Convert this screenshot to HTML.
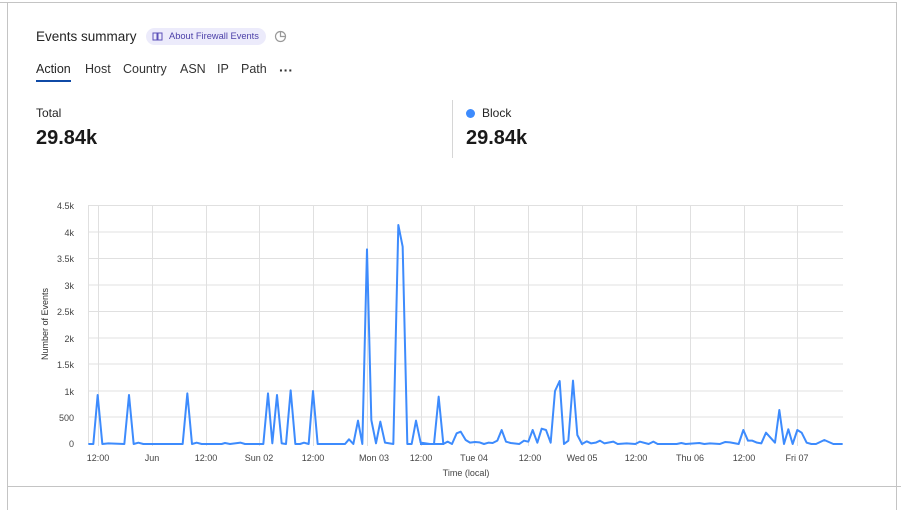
<!DOCTYPE html>
<html><head><style>
body{margin:0;width:901px;height:510px;background:#fff;font-family:"Liberation Sans",sans-serif;color:#1f1f1f;position:relative;overflow:hidden}
.a{position:absolute;white-space:nowrap}
</style></head><body>
<div class="a" style="left:0;top:2px;width:897px;height:1px;background:#c4c4c4"></div>
<div class="a" style="left:7px;top:486px;width:894px;height:1px;background:#c4c4c4"></div>
<div class="a" style="left:7px;top:2px;width:1px;height:508px;background:#c4c4c4"></div>
<div class="a" style="left:896px;top:2px;width:1px;height:508px;background:#c4c4c4"></div>
<div class="a" style="left:36px;top:29px;font-size:13.5px;color:#242424">Events summary</div>
<div class="a" style="left:146px;top:28px;width:120px;height:17px;border-radius:9px;background:#ecebfb"></div>
<svg class="a" style="left:152px;top:31px" width="12" height="11" viewBox="0 0 12 11"><path d="M1 2h4v7H1zM6 2h4v7H6z" fill="none" stroke="#5b50b8" stroke-width="1"/></svg>
<div class="a" style="left:169px;top:31px;font-size:9.3px;color:#4b3fa8">About Firewall Events</div>
<svg class="a" style="left:274px;top:30px" width="13" height="13" viewBox="0 0 13 13"><circle cx="6.5" cy="6.5" r="5" fill="none" stroke="#999" stroke-width="1.2"/><path d="M6.5 1.5v5h5" fill="none" stroke="#999" stroke-width="1.2"/></svg>
<div class="a" style="left:36px;top:62px;font-size:12.5px;color:#242424">Action</div>
<div class="a" style="left:36px;top:80px;width:35px;height:2px;background:#0f4aa6"></div>
<div class="a" style="left:85px;top:62px;font-size:12.5px;color:#333">Host</div>
<div class="a" style="left:123px;top:62px;font-size:12.5px;color:#333">Country</div>
<div class="a" style="left:180px;top:62px;font-size:12.5px;color:#333">ASN</div>
<div class="a" style="left:217px;top:62px;font-size:12.5px;color:#333">IP</div>
<div class="a" style="left:241px;top:62px;font-size:12.5px;color:#333">Path</div>
<div class="a" style="left:279px;top:62px;font-size:14px;font-weight:bold;color:#333">···</div>
<div class="a" style="left:36px;top:106px;font-size:12px;color:#242424">Total</div>
<div class="a" style="left:36px;top:127px;font-size:20px;font-weight:bold;color:#1a1a1a">29.84k</div>
<div class="a" style="left:452px;top:100px;width:1px;height:58px;background:#d6d6d6"></div>
<div class="a" style="left:466px;top:109px;width:9px;height:9px;border-radius:50%;background:#3d8bfd"></div>
<div class="a" style="left:482px;top:106px;font-size:12px;color:#242424">Block</div>
<div class="a" style="left:466px;top:127px;font-size:20px;font-weight:bold;color:#1a1a1a">29.84k</div>
<svg class="a" style="left:0;top:0" width="901" height="510">
<g stroke="#e0e0e0" stroke-width="1">
<line x1="88" y1="205.5" x2="843" y2="205.5"/><line x1="88" y1="232" x2="843" y2="232"/><line x1="88" y1="285" x2="843" y2="285"/><line x1="88" y1="338" x2="843" y2="338"/><line x1="88" y1="364" x2="843" y2="364"/><line x1="88" y1="391" x2="843" y2="391"/><line x1="88" y1="417" x2="843" y2="417"/><line x1="88" y1="258.5" x2="843" y2="258.5"/><line x1="88" y1="311.5" x2="843" y2="311.5"/>
<line x1="88.5" y1="205" x2="88.5" y2="444"/>
<line x1="98.5" y1="205" x2="98.5" y2="446"/><line x1="152.5" y1="205" x2="152.5" y2="446"/><line x1="206.5" y1="205" x2="206.5" y2="446"/><line x1="259.5" y1="205" x2="259.5" y2="446"/><line x1="313.5" y1="205" x2="313.5" y2="446"/><line x1="367.5" y1="205" x2="367.5" y2="446"/><line x1="421.5" y1="205" x2="421.5" y2="446"/><line x1="474.5" y1="205" x2="474.5" y2="446"/><line x1="528.5" y1="205" x2="528.5" y2="446"/><line x1="582.5" y1="205" x2="582.5" y2="446"/><line x1="636.5" y1="205" x2="636.5" y2="446"/><line x1="690.5" y1="205" x2="690.5" y2="446"/><line x1="744.5" y1="205" x2="744.5" y2="446"/><line x1="797.5" y1="205" x2="797.5" y2="446"/>
</g>
<g font-size="9" fill="#444" text-anchor="end" font-family="Liberation Sans,sans-serif">
<text x="74" y="209">4.5k</text><text x="74" y="236">4k</text><text x="74" y="262">3.5k</text><text x="74" y="289">3k</text><text x="74" y="315">2.5k</text><text x="74" y="342">2k</text><text x="74" y="368">1.5k</text><text x="74" y="395">1k</text><text x="74" y="421">500</text><text x="74" y="447">0</text>
</g>
<text transform="translate(48,324) rotate(-90)" font-size="9" fill="#333" text-anchor="middle" font-family="Liberation Sans,sans-serif">Number of Events</text>
<g font-size="9" fill="#444" text-anchor="middle" font-family="Liberation Sans,sans-serif">
<text x="98" y="461">12:00</text><text x="152" y="461">Jun</text><text x="206" y="461">12:00</text><text x="259" y="461">Sun 02</text><text x="313" y="461">12:00</text><text x="374" y="461">Mon 03</text><text x="421" y="461">12:00</text><text x="474" y="461">Tue 04</text><text x="530" y="461">12:00</text><text x="582" y="461">Wed 05</text><text x="636" y="461">12:00</text><text x="690" y="461">Thu 06</text><text x="744" y="461">12:00</text><text x="797" y="461">Fri 07</text>
<text x="466" y="476">Time (local)</text>
</g>
<g transform="translate(30,190) scale(0.33333)" fill="none" stroke="#3d8bfd" stroke-width="6" stroke-linejoin="round">
<polyline points="175,762 190,762 203,615 217,762 235,760 283,762 297,615 311,762 325,758 340,762 458,762 472,610 486,762 500,758 515,762 575,762 585,759 600,762 632,758 645,762 700,762 714,610 727,760 741,615 755,760 768,762 782,601 796,762 810,762 822,758 836,762 849,603 863,762 945,762 957,748 970,762 984,692 997,762 1011,178 1024,690 1038,760 1051,695 1065,758 1090,762 1105,105 1118,170 1132,762 1145,762 1158,692 1172,758 1200,762 1224,762 1242,762"/>
</g>
<g transform="translate(420,190) scale(0.33333)" fill="none" stroke="#3d8bfd" stroke-width="6" stroke-linejoin="round">
<polyline points="0,762 42,762 56,620 70,762 83,755 96,762 110,730 122,725 137,750 150,758 165,756 178,757 192,762 205,758 218,759 232,752 245,720 258,755 272,759 298,762 312,752 325,755 338,720 352,758 365,716 378,720 392,758 405,603 419,573 432,762 445,752 459,572 472,735 486,762 500,754 513,760 527,758 540,752 553,760 580,755 593,762 620,760 646,762 660,755 686,762 700,755 713,762 770,762 784,759 797,762 838,759 853,762 870,760 900,762 916,756 930,757 956,762 970,720 984,752 997,752 1011,758 1024,760 1038,728 1065,758 1078,660 1092,762 1105,718 1118,762 1132,720 1145,728 1160,758 1174,762 1188,762 1213,750 1240,762 1268,762"/>
</g>
</svg>
</body></html>
